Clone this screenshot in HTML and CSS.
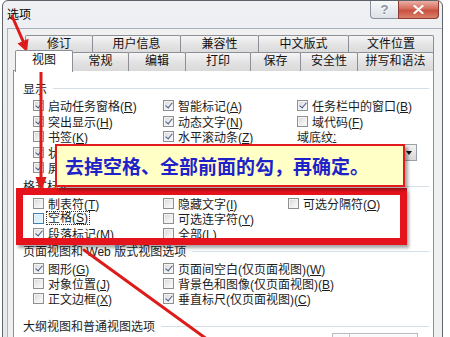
FILE: index.html
```html
<!DOCTYPE html>
<html lang="zh-CN">
<head>
    <meta charset="UTF-8">
    <title>选项</title>
    <link rel="stylesheet" href="styles.css">
</head>
<body>
<div class="page">
    <div class="window">
        <div class="titlebar">
            <span class="title">选项</span>
            <div class="caption-buttons">
                <button class="help-btn">?</button>
                <button class="close-btn">
                    <svg width="11" height="9" viewBox="0 0 11 9"><path d="M1.5 1 L9.5 8 M9.5 1 L1.5 8" stroke="#fff" stroke-width="2.2" stroke-linecap="round"/></svg>
                </button>
            </div>
        </div>

        <div class="client">
            <div class="tab-control">
                <div class="tab-row back-row">
                    <div class="tab">修订</div>
                    <div class="tab">用户信息</div>
                    <div class="tab">兼容性</div>
                    <div class="tab">中文版式</div>
                    <div class="tab">文件位置</div>
                </div>
                <div class="tab-row front-row">
                    <div class="tab selected">视图</div>
                    <div class="tab">常规</div>
                    <div class="tab">编辑</div>
                    <div class="tab">打印</div>
                    <div class="tab">保存</div>
                    <div class="tab">安全性</div>
                    <div class="tab">拼写和语法</div>
                </div>

                <div class="panel">
                    <div class="group">
                        <div class="group-title">显示</div>
                        <div class="options display-opts">
                            <label class="opt"><span class="box checked"></span><span>启动任务窗格(<u>R</u>)</span></label>
                            <label class="opt"><span class="box checked"></span><span>智能标记(<u>A</u>)</span></label>
                            <label class="opt"><span class="box checked"></span><span>任务栏中的窗口(<u>B</u>)</span></label>

                            <label class="opt"><span class="box checked"></span><span>突出显示(<u>H</u>)</span></label>
                            <label class="opt"><span class="box checked"></span><span>动态文字(<u>N</u>)</span></label>
                            <label class="opt"><span class="box"></span><span>域代码(<u>F</u>)</span></label>

                            <label class="opt"><span class="box"></span><span>书签(<u>K</u>)</span></label>
                            <label class="opt"><span class="box checked"></span><span>水平滚动条(<u>Z</u>)</span></label>
                            <span class="field-label">域底纹<u>:</u></span>

                            <label class="opt"><span class="box checked"></span><span>状态栏(<u>U</u>)</span></label>
                            <span></span>
                            <div class="combo"><span class="combo-arrow"></span></div>

                            <label class="opt"><span class="box checked"></span><span>屏幕提示(<u>N</u>)</span></label>
                        </div>
                    </div>

                    <div class="group">
                        <div class="group-title">格式标记</div>
                        <div class="options marks-opts">
                            <label class="opt"><span class="box"></span><span>制表符(<u>T</u>)</span></label>
                            <label class="opt"><span class="box"></span><span>隐藏文字(<u>I</u>)</span></label>
                            <label class="opt"><span class="box"></span><span>可选分隔符(<u>O</u>)</span></label>

                            <label class="opt"><span class="box hot"></span><span class="focus">空格(<u>S</u>)</span></label>
                            <label class="opt"><span class="box"></span><span>可选连字符(<u>Y</u>)</span></label>
                            <span></span>

                            <label class="opt"><span class="box checked"></span><span>段落标记(<u>M</u>)</span></label>
                            <label class="opt"><span class="box"></span><span>全部(<u>L</u>)</span></label>
                        </div>
                    </div>

                    <div class="group">
                        <div class="group-title">页面视图和 Web 版式视图选项</div>
                        <div class="options page-opts">
                            <label class="opt"><span class="box checked"></span><span>图形(<u>G</u>)</span></label>
                            <label class="opt"><span class="box checked"></span><span>页面间空白(仅页面视图)(<u>W</u>)</span></label>

                            <label class="opt"><span class="box"></span><span>对象位置(<u>J</u>)</span></label>
                            <label class="opt"><span class="box"></span><span>背景色和图像(仅页面视图)(<u>B</u>)</span></label>

                            <label class="opt"><span class="box"></span><span>正文边框(<u>X</u>)</span></label>
                            <label class="opt"><span class="box checked"></span><span>垂直标尺(仅页面视图)(<u>C</u>)</span></label>
                        </div>
                    </div>

                    <div class="group outline-group">
                        <div class="group-title">大纲视图和普通视图选项</div>
                        <div class="draft-row">
                            <div class="draft-box"><span></span></div>
                        </div>
                    </div>
                </div>
            </div>
        </div>
    </div>

    <!-- annotations drawn over the dialog -->
    <div class="highlight"></div>
    <div class="callout">去掉空格、全部前面的勾，再确定。</div>
    <svg class="arrows" width="450" height="337" viewBox="0 0 450 337">
        <g stroke="#de1b1b" stroke-width="3" fill="none" stroke-linecap="round">
            <line x1="12" y1="16" x2="23" y2="41"/>
            <line x1="41" y1="71" x2="41" y2="178"/>
            <line x1="84" y1="250" x2="215" y2="345"/>
        </g>
        <g fill="#de1b1b">
            <polygon points="27,52 17.5,43.5 28.5,38.8"/>
            <polygon points="41,192 35.5,177 46.5,177"/>
        </g>
    </svg>
</div>
</body>
</html>
```

FILE: styles.css
```css
body {
    margin: 0;
    font-family: "Liberation Sans", "Noto Sans CJK SC", sans-serif;
    font-size: 12px;
    color: #1c1c1c;
}

.page {
    position: relative;
    width: 450px;
    height: 337px;
    overflow: hidden;
    background: #ffffff;
}

.window {
    margin-left: 2px;
    width: 439px;
    height: 360px;
    border: 1px solid #5d646c;
    border-radius: 6px 6px 0 0;
    background: linear-gradient(#eef0f3, #e4e7eb);
    display: flex;
    flex-direction: column;
}

.titlebar {
    height: 27px;
    display: flex;
    align-items: flex-start;
    flex-shrink: 0;
}

.title {
    margin: 6px 0 0 4px;
    line-height: 17px;
    color: #000;
}

.caption-buttons {
    margin-left: auto;
    margin-right: 3px;
    display: flex;
}

.caption-buttons button {
    height: 18px;
    padding: 0;
    border: 1px solid #8a919b;
    border-top: none;
    display: flex;
    align-items: center;
    justify-content: center;
}

.help-btn {
    width: 29px;
    border-radius: 0 0 0 4px;
    background: linear-gradient(#f7f8fa, #dde1e6);
    color: #8a939e;
    font-family: "Liberation Sans", sans-serif;
    font-size: 13px;
    font-weight: bold;
    text-shadow: 0 1px 0 #fff;
}

.close-btn {
    width: 41px;
    margin-left: -1px;
    border-color: #8e3a31 !important;
    border-radius: 0 0 4px 0;
    background: linear-gradient(#eab0a4, #d66d5c 45%, #c8513f 55%, #d9806c);
}

.client {
    flex: 1;
    margin-left: 4px;
    padding-top: 6px;
    border-top: 1px solid #aab3bd;
    border-left: 1px solid #aab3bd;
    background: #f0f0f0;
}

.tab-control {
    margin-left: 5px;
    width: 421px;
    height: 100%;
    display: flex;
    flex-direction: column;
}

.tab-row {
    display: flex;
}

.back-row {
    height: 17px;
    padding-left: 12px;
}

.front-row {
    height: 18px;
    padding-left: 2px;
    position: relative;
    z-index: 1;
}

.tab {
    box-sizing: border-box;
    height: 19px;
    margin-left: -1px;
    border: 1px solid #8c8f96;
    border-bottom: none;
    border-radius: 2px 2px 0 0;
    background: linear-gradient(#f5f5f5, #e3e3e3 50%, #d9d9d9);
    text-align: center;
    line-height: 16px;
    color: #111;
}

.tab:first-child {
    margin-left: 0;
}

.back-row .tab:nth-child(1) { width: 68px; }
.back-row .tab:nth-child(2) { width: 89px; }
.back-row .tab:nth-child(3) { width: 79px; }
.back-row .tab:nth-child(4) { width: 91px; }
.back-row .tab:nth-child(5) { width: 86px; }

.front-row .tab:nth-child(1) { width: 58px; }
.front-row .tab:nth-child(2) { width: 57px; }
.front-row .tab:nth-child(3) { width: 58px; }
.front-row .tab:nth-child(4) { width: 66px; }
.front-row .tab:nth-child(5) { width: 51px; }
.front-row .tab:nth-child(6) { width: 58px; }
.front-row .tab:nth-child(7) { width: 77px; }

.tab.selected {
    position: relative;
    z-index: 2;
    height: 22px;
    margin-top: -2px;
    background: #ffffff;
    line-height: 19px;
}

.panel {
    flex: 1;
    position: relative;
    border: 1px solid #8c8f96;
    background: #ffffff;
    padding: 8px 0 0 9px;
}

.group + .group {
    margin-top: 1px;
}

.group.outline-group {
    margin-top: 11px;
}

.group-title {
    height: 18px;
    display: flex;
    align-items: center;
    color: #1e1e1e;
}

.group-title::after {
    content: "";
    flex: 1;
    height: 1px;
    margin: 1px 4px 0 6px;
    background: #d5dfe5;
}

.options {
    display: grid;
    margin: 1px 0 0 10px;
    grid-auto-rows: 15px;
}

.display-opts {
    grid-template-columns: 130px 134px 1fr;
    grid-auto-rows: 15.5px;
}

.marks-opts {
    grid-template-columns: 130px 125px 1fr;
}

.page-opts {
    grid-template-columns: 130px 1fr;
}

.opt {
    display: flex;
    align-items: center;
    white-space: nowrap;
    color: #1c1c1c;
}

.opt u,
.field-label u {
    text-underline-offset: 1px;
}

.box {
    position: relative;
    box-sizing: border-box;
    width: 11px;
    height: 11px;
    flex-shrink: 0;
    margin-right: 4px;
    border: 1px solid #8e8f8f;
    background: linear-gradient(135deg, #d6d6d6, #f4f4f4 70%, #fbfbfb);
    box-shadow: inset 0 0 0 1px #f4f4f4;
}

.box.checked::after {
    content: "";
    position: absolute;
    left: 3px;
    top: 0;
    width: 3px;
    height: 6px;
    border-right: 1.5px solid #44598a;
    border-bottom: 1.5px solid #44598a;
    transform: rotate(40deg);
}

.box.hot {
    border-color: #3c7fb1;
    background: linear-gradient(135deg, #cfeaf8, #e6f5fd);
    box-shadow: inset 0 0 0 1px #eaf6fd;
}

.focus {
    padding: 0 1px;
    margin-left: -1px;
    outline: 1px dotted #333;
    line-height: 12px;
}

.field-label {
    display: flex;
    align-items: center;
}

.combo {
    box-sizing: border-box;
    width: 120px;
    height: 17px;
    margin-top: -1px;
    border: 1px solid #9aa0a8;
    background: #fff;
    display: flex;
    justify-content: flex-end;
}

.combo-arrow {
    width: 14px;
    border-left: 1px solid #c4c8cc;
    background: linear-gradient(#f2f2f2, #d8d8d8);
    position: relative;
}

.combo-arrow::after {
    content: "";
    position: absolute;
    left: 4px;
    top: 6px;
    border: 3px solid transparent;
    border-top: 4px solid #111;
}

.draft-row {
    display: flex;
    justify-content: flex-end;
    margin-top: -2px;
    padding-right: 15px;
}

.draft-box {
    box-sizing: border-box;
    width: 86px;
    height: 20px;
    border: 1px solid #b6bcc2;
    background: linear-gradient(#fbfbfb, #eeeeee);
    display: flex;
}

.draft-box span {
    width: 16px;
    border-right: 1px solid #c5c9cd;
}

/* annotation layer */
.highlight {
    position: absolute;
    left: 16px;
    top: 188px;
    width: 391px;
    height: 57px;
    box-sizing: border-box;
    border: 7px solid #e5131b;
    box-shadow: 2px 3px 3px rgba(0, 0, 0, 0.35);
}

.callout {
    position: absolute;
    left: 55px;
    top: 144px;
    width: 350px;
    height: 43px;
    box-sizing: border-box;
    border: 2px solid #e2191e;
    background: #ffffc6;
    box-shadow: 3px 3px 3px rgba(0, 0, 0, 0.35);
    padding-left: 8px;
    display: flex;
    align-items: center;
    color: #1f22c8;
    font-family: "Noto Sans CJK SC", sans-serif;
    font-size: 19px;
    font-weight: bold;
    white-space: nowrap;
}

.arrows {
    position: absolute;
    left: 0;
    top: 0;
    pointer-events: none;
}
```
